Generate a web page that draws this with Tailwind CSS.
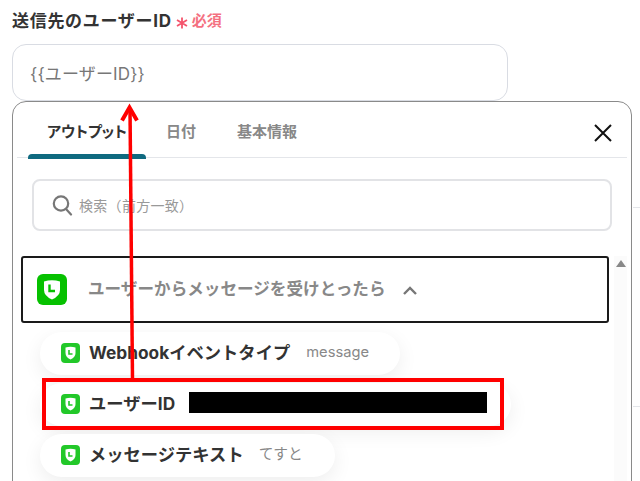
<!DOCTYPE html>
<html lang="ja">
<head>
<meta charset="utf-8">
<script src="https://cdn.jsdelivr.net/npm/@tailwindcss/browser@4"></script>
</head>
<body class="bg-white">
<div class="relative w-[640px] h-[481px] overflow-hidden bg-white font-['Inter','Noto_Sans_CJK_JP',sans-serif] text-[#333]">
  <!-- label -->
  <div class="pl-[12px] pt-[10px] h-[44px] flex items-start">
    <span class="text-[17px] leading-[22px] font-bold text-[#333] tracking-[0.7px]">送信先のユーザーID</span>
    <svg class="ml-[4px] mt-[7px]" width="12" height="12" viewBox="0 0 12 12" fill="none" stroke="#f4546c" stroke-width="1.800"><path d="M6 0.500V11.500M1 3L11 9M11 3L1 9"/></svg>
    <span class="ml-[4px] text-[#f4707f] text-[15px] leading-[22px] font-bold">必須</span>
  </div>
  <!-- input -->
  <div class="ml-[12px] w-[496px] h-[57px] rounded-[14px] border border-[#d9dce3] px-[17px] pt-[5px] flex items-center text-[17px] tracking-[0.15px] text-[#777]">{{ユーザーID}}</div>
  <!-- popup -->
  <div class="ml-[12px] w-[620px] h-[400px] rounded-t-[14px] border border-[#8a8a8a] bg-white pt-0 px-[4px]">
    <div class="relative flex items-start h-[56px] border-b border-[#e4e6ea] text-[15px] font-bold">
      <div class="w-[118px] ml-[11px] h-[56px] relative pt-[19px] leading-[22px] text-center text-[#333] [font-feature-settings:'palt']">アウトプット<span class="absolute left-0 right-0 bottom-[-1px] h-[5px] rounded-t-[4px] bg-[#0f6a80]"></span></div>
      <div class="ml-[20px] pt-[19px] leading-[22px] text-[#888]">日付</div>
      <div class="ml-[41px] pt-[19px] leading-[22px] text-[#888]">基本情報</div>
      <svg class="absolute left-[577px] top-[22px]" width="18" height="18" viewBox="0 0 18 18" fill="none" stroke="#111" stroke-width="2"><path d="M1 1L17 17M17 1L1 17"/></svg>
    </div>
    <div class="ml-[15px] mt-[21px] w-[580px] h-[52px] rounded-[8px] border-2 border-[#e2e3e6] flex items-center pl-[18px]">
      <svg width="21" height="22" viewBox="0 0 21 22" fill="none" stroke="#777" stroke-width="2.2"><circle cx="9" cy="9.5" r="7.2"/><path d="M14 15l5 5.5" stroke-linecap="round"/></svg>
      <span class="ml-[6px] text-[14px] tracking-[0.3px] text-[#999]">検索（前方一致）</span>
    </div>
    <div class="flex mt-[25px] items-start">
      <div class="w-[597px] shrink-0 pl-[4px]">
        <div class="w-[588px] h-[67px] ml-0 rounded-[3px] border-2 border-[#1a1a1a] flex items-center pl-[14px]">
          <svg width="30" height="31" viewBox="0 0 30 31"><rect width="30" height="31" rx="6" fill="#06c100"/><path d="M7 7.500Q15 5 23 7.500V16Q23 22 15 25.500Q7 22 7 16Z" fill="#fff"/><path d="M12.500 10.500V17H18" fill="none" stroke="#06c100" stroke-width="2.400"/></svg>
          <span class="ml-[21px] text-[16.600px] font-bold text-[#888]">ユーザーからメッセージを受けとったら</span>
          <svg class="ml-[17px] mt-[2px]" width="14" height="9" viewBox="0 0 14 9" fill="none" stroke="#777" stroke-width="2.400"><path d="M1 8L7 2L13 8"/></svg>
        </div>
        <div class="pl-[19px] pt-[9px] flex flex-col gap-[8px] items-start">
          <div class="h-[43px] w-[360px] rounded-full bg-white shadow-[0_6px_20px_rgba(0,0,0,0.07)] flex items-center pl-[21px] pb-[2px]">
            <svg width="19" height="20" viewBox="0 0 19 20"><rect width="19" height="20" rx="4" fill="#22c829"/><path d="M4.500 4.500Q9.500 3 14.500 4.500V10Q14.500 14 9.500 16.500Q4.500 14 4.500 10Z" fill="#fff"/><path d="M8 7V11H11.500" fill="none" stroke="#22c829" stroke-width="1.600"/></svg>
            <span class="ml-[9px] text-[17.300px] font-bold text-[#333]">Webhookイベントタイプ</span>
            <span class="ml-[16px] text-[14.700px] text-[#888]">message</span>
          </div>
          <div class="h-[43px] w-[471px] rounded-full bg-white shadow-[0_6px_20px_rgba(0,0,0,0.07)] flex items-center pl-[21px] pb-[2px]">
            <svg width="19" height="20" viewBox="0 0 19 20"><rect width="19" height="20" rx="4" fill="#22c829"/><path d="M4.500 4.500Q9.500 3 14.500 4.500V10Q14.500 14 9.500 16.500Q4.500 14 4.500 10Z" fill="#fff"/><path d="M8 7V11H11.500" fill="none" stroke="#22c829" stroke-width="1.600"/></svg>
            <span class="ml-[9px] text-[17.300px] font-bold text-[#333]">ユーザーID</span>
            <span class="ml-[14px] mb-[2px] w-[298px] h-[21px] bg-black"></span>
          </div>
          <div class="h-[43px] w-[295px] rounded-full bg-white shadow-[0_6px_20px_rgba(0,0,0,0.07)] flex items-center pl-[21px] pb-[2px]">
            <svg width="19" height="20" viewBox="0 0 19 20"><rect width="19" height="20" rx="4" fill="#22c829"/><path d="M4.500 4.500Q9.500 3 14.500 4.500V10Q14.500 14 9.500 16.500Q4.500 14 4.500 10Z" fill="#fff"/><path d="M8 7V11H11.500" fill="none" stroke="#22c829" stroke-width="1.600"/></svg>
            <span class="ml-[9px] text-[17.300px] font-bold text-[#333]">メッセージテキスト</span>
            <span class="ml-[15px] text-[14.700px] text-[#888]">てすと</span>
          </div>
        </div>
      </div>
      <div class="w-[18px] h-[230px] bg-[#fbfbfb] flex justify-center pt-[4px]">
        <span class="w-0 h-0 border-x-[5px] border-x-transparent border-b-[7px] border-b-[#888]"></span>
      </div>
    </div>
  </div>
  <!-- page lines beyond popup -->
  <div class="absolute left-[633px] top-[207px] w-[7px] h-px bg-[#e4e6ea]"></div>
  <div class="absolute left-[633px] top-[406px] w-[7px] h-px bg-[#e4e6ea]"></div>
  <!-- annotations -->
  <div class="absolute left-[42px] top-[378px] w-[462px] h-[52px] border-[4px] border-[#ff0000]"></div>
  <svg class="absolute left-0 top-0 pointer-events-none" width="640" height="481" fill="none" stroke="#ff0000" stroke-width="3.500">
    <path d="M132.500 379L130 108"/>
    <path d="M122 120.500L129.500 107.500L137 120.500" stroke-width="4"/>
  </svg>
</div>
</body>
</html>
